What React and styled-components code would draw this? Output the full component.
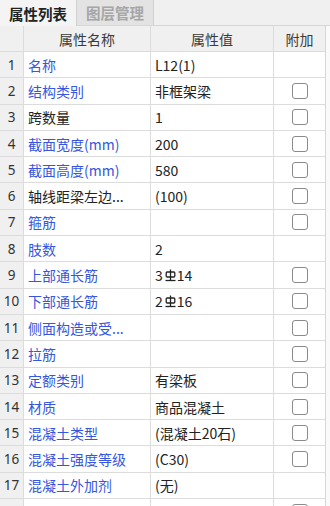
import React from 'react';
import styled, { createGlobalStyle } from 'styled-components';

const GlobalStyle = createGlobalStyle`
  html, body {
    margin: 0;
    padding: 0;
    background: #fafafa;
    font-family: "Noto Sans CJK SC", "Noto Sans", sans-serif;
  }
`

const Panel = styled.div`
  width: 330px;
  height: 506px;
  overflow: hidden;
  background: #fafafa;
  display: flex;
  flex-direction: column;
`

const TabBar = styled.div`
  display: flex;
  flex-shrink: 0;
  height: 26px;
  background: #f0f0f0;
  border-bottom: 1px solid #d6d6d6;
  box-sizing: border-box;
`

const Tab = styled.div`
  width: 77px;
  box-sizing: border-box;
  display: flex;
  align-items: center;
  justify-content: center;
  font-size: 14.5px;
  font-weight: 700;
  color: ${p => (p.$active ? '#222' : '#a6a6a6')};
  background: ${p => (p.$active ? '#f4f4f4' : '#e3e3e3')};
  border-right: 1px solid #d2d2d2;
  margin-bottom: ${p => (p.$active ? '-1px' : '0')};
`

const Table = styled.div`
  width: 325px;
  flex-shrink: 0;
  border-right: 1px solid #d6d6d6;
  background: #fff;
`

const Row = styled.div`
  display: grid;
  grid-template-columns: 24px 127px 123px 51px;
  height: ${p => (p.$head ? '26px' : '26.3px')};
  box-sizing: border-box;
  border-bottom: 1px solid #dcdcdc;
  background: ${p => (p.$head ? '#f0f0f0' : '#fff')};
`

const Cell = styled.div`
  display: flex;
  align-items: center;
  justify-content: ${p => (p.$center ? 'center' : 'flex-start')};
  padding-left: ${p => (p.$center ? '0' : '4px')};
  border-right: 1px solid #dcdcdc;
  font-size: 14px;
  color: #222;
  white-space: nowrap;
  overflow: hidden;
  &:last-child { border-right: none; }
`

const HeadCell = styled(Cell)`
  color: #3a3a3a;
  justify-content: center;
  padding-left: 0;
`

const NumCell = styled(Cell)`
  background: #f0f0f0;
  justify-content: center;
  padding-left: 0;
  color: #333;
  font-family: "Noto Sans", "Open Sans", sans-serif;
  font-size: 13.5px;
`

const NameCell = styled(Cell)`
  color: ${p => (p.$plain ? '#222' : '#3556e0')};
`

const Check = styled.div`
  width: 14px;
  height: 14px;
  border: 1px solid #8a8a8a;
  border-radius: 3px;
  background: #fff;
`

const Bar = () => (
  <svg width="11" height="13" viewBox="0 0 11 13" style={{ margin: '0 1px 0 2px' }}>
    <g fill="none" stroke="#222" strokeWidth="1.3">
      <rect x="1.2" y="3" width="8.6" height="5" rx="1" />
      <line x1="5.5" y1="0.5" x2="5.5" y2="11.5" />
      <line x1="0.5" y1="11.5" x2="10.5" y2="11.5" />
    </g>
  </svg>
)

const rows = [
  ['名称', 'L12(1)', false, false],
  ['结构类别', '非框架梁', true, false],
  ['跨数量', '1', true, true],
  ['截面宽度(mm)', '200', true, false],
  ['截面高度(mm)', '580', true, false],
  ['轴线距梁左边...', '(100)', true, true],
  ['箍筋', '', true, false],
  ['肢数', '2', false, false],
  ['上部通长筋', ['3', '14'], true, false],
  ['下部通长筋', ['2', '16'], true, false],
  ['侧面构造或受...', '', true, false],
  ['拉筋', '', true, false],
  ['定额类别', '有梁板', true, false],
  ['材质', '商品混凝土', true, false],
  ['混凝土类型', '(混凝土20石)', true, false],
  ['混凝土强度等级', '(C30)', true, false],
  ['混凝土外加剂', '(无)', false, false],
  ['泵送类型', '(混凝土泵)', true, false],
]

export default function App() {
  return (
    <>
      <GlobalStyle />
      <Panel>
        <TabBar>
          <Tab $active>属性列表</Tab>
          <Tab>图层管理</Tab>
        </TabBar>
        <Table>
          <Row $head>
            <HeadCell />
            <HeadCell>属性名称</HeadCell>
            <HeadCell>属性值</HeadCell>
            <HeadCell>附加</HeadCell>
          </Row>
          {rows.map(([name, value, check, plain], i) => (
            <Row key={i}>
              <NumCell>{i + 1}</NumCell>
              <NameCell $plain={plain}>{name}</NameCell>
              <Cell>
                {Array.isArray(value) ? (
                  <>
                    {value[0]}
                    <Bar />
                    {value[1]}
                  </>
                ) : (
                  value
                )}
              </Cell>
              <Cell $center>{check && <Check />}</Cell>
            </Row>
          ))}
        </Table>
      </Panel>
    </>
  )
}
